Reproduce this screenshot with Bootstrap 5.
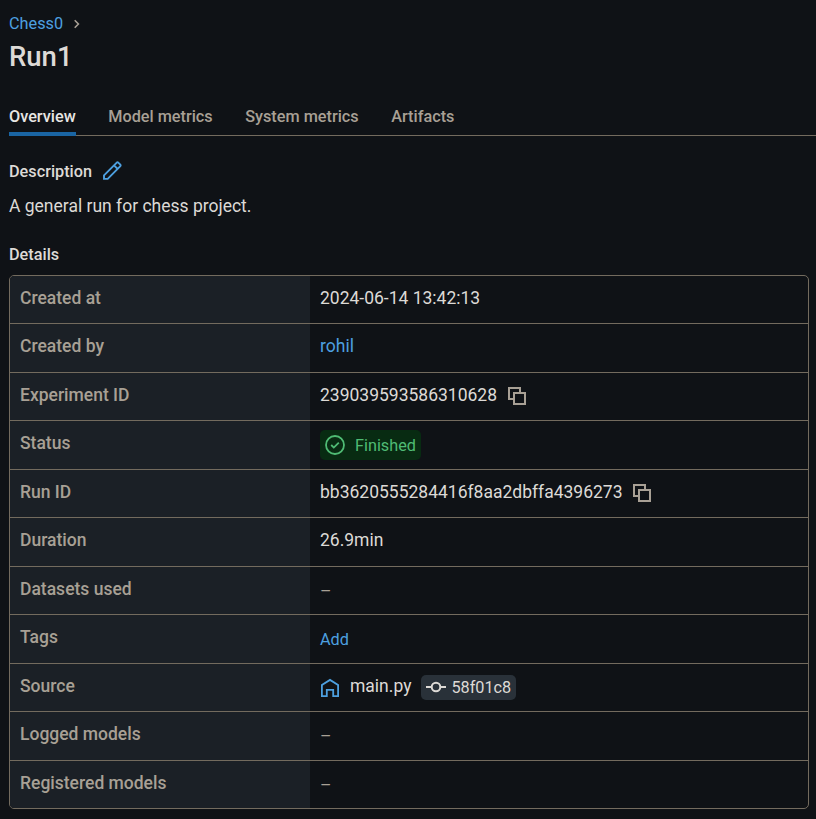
<!DOCTYPE html>
<html lang="en" data-bs-theme="dark">
<head>
<meta charset="utf-8">
<meta name="viewport" content="width=device-width, initial-scale=1">
<title>Run1</title>
<link href="https://cdn.jsdelivr.net/npm/bootstrap@5.3.0/dist/css/bootstrap.min.css" rel="stylesheet">
<style>
body{background:#0f1216;color:#dddad6;font-family:Roboto,"Liberation Sans",sans-serif;font-size:17.5px;line-height:25px;overflow:hidden}
a{color:#4da0e0;text-decoration:none}
svg{display:block;flex:none;fill:none;stroke:currentColor}
.page{padding:11px 0 0 9px}
.crumb{font-size:16.25px}
.crumb svg,.muted{color:#a8a095}
.chev{margin-left:11px}
.run-title{font-size:27.5px;line-height:40px;font-weight:500;margin:1px 0 27px;color:#dddad6}
.run-tabs{gap:32.5px;border-bottom:1px solid #736b5e;font-size:16.25px;font-weight:500;line-height:25px}
.run-tabs a{color:#a8a095;padding:0 0 3px;border-bottom:4px solid transparent;margin-bottom:-1px}
.run-tabs .active{color:#e8e6e3;border-color:#1a65a3}
.heading{font-size:16.25px;font-weight:500;line-height:25px;margin:0;color:#dddad6}
.desc-head{margin-top:23px}
.edit{margin:-3px 0 0 11px}
.desc-text{margin:10px 0 23px}
.details{width:800px;border:1px solid #736b5e;border-radius:5px;overflow:hidden;margin:7.5px 0 0}
.entry{height:48.5px;border-bottom:1px solid #736b5e}
.entry:last-child{border-bottom:0;height:47.5px}
.entry dt{width:300px;background:#1b2026;color:#a8a095;font-weight:500;padding:10px 10px 0}
.entry dd{margin:0;padding:10px 10px 0}
.entry .dash{padding-top:12px}
.entry .tag{padding-top:12px}
.small-text{font-size:16.25px}
.copy{margin:4px 0 0 10.5px}
.home{margin:4px 10px 0 0}
.finished{background:#082b12;color:#4fbb74;border-radius:5px;height:30px;padding:0 5px;gap:10px;margin-top:-1px}
.commit{background:#293139;border-radius:5px;height:25px;padding:0 5px;gap:5px;margin:1px 0 0 10px}
</style>
</head>
<body>
<svg class="d-none"><defs>
<symbol id="copy" viewBox="0 0 18 18"><path d="M6 12H1V1h11v5M6 6h11v11H6z"/></symbol>
</defs></svg>
<main class="page">
<nav class="crumb d-flex align-items-center"><a href="#">Chess0</a><svg class="chev" width="6" height="10" viewBox="0 0 6 10" stroke-width="1.6"><path d="M.7 1.3 4.4 5 .7 8.7"/></svg></nav>
<h1 class="run-title">Run1</h1>
<nav class="run-tabs d-flex"><a class="active" href="#">Overview</a><a href="#">Model metrics</a><a href="#">System metrics</a><a href="#">Artifacts</a></nav>
<section>
<div class="desc-head d-flex align-items-center"><h2 class="heading">Description</h2><a href="#" class="edit" aria-label="Edit"><svg width="19" height="19" viewBox="0 0 19 19" stroke-width="1.9"><path d="M1 14.3 13.5 1.8q1-1 2 0l1.6 1.6q1 1 0 2L4.7 17.9H1zM11 4.3l3.7 3.7"/></svg></a></div>
<p class="desc-text">A general run for chess project.</p>
<h2 class="heading">Details</h2>
<dl class="details">
<div class="entry d-flex"><dt>Created at</dt><dd>2024-06-14 13:42:13</dd></div>
<div class="entry d-flex"><dt>Created by</dt><dd><a href="#">rohil</a></dd></div>
<div class="entry d-flex"><dt>Experiment ID</dt><dd class="d-flex">239039593586310628<svg class="muted copy" width="18" height="18" stroke-width="2"><use href="#copy"/></svg></dd></div>
<div class="entry d-flex"><dt>Status</dt><dd><span class="finished small-text d-flex align-items-center"><svg width="20" height="20" viewBox="0 0 20 20" stroke-width="1.8"><circle cx="10" cy="10" r="9"/><path d="m6.2 10 2.6 2.6 5-5"/></svg>Finished</span></dd></div>
<div class="entry d-flex"><dt>Run ID</dt><dd class="d-flex">bb3620555284416f8aa2dbffa4396273<svg class="muted copy" width="18" height="18" stroke-width="2"><use href="#copy"/></svg></dd></div>
<div class="entry d-flex"><dt>Duration</dt><dd>26.9min</dd></div>
<div class="entry d-flex"><dt>Datasets used</dt><dd class="muted dash">–</dd></div>
<div class="entry d-flex"><dt>Tags</dt><dd class="tag"><a class="small-text" href="#">Add</a></dd></div>
<div class="entry d-flex"><dt>Source</dt><dd class="d-flex"><a href="#" class="home" aria-label="Project"><svg width="20" height="20" viewBox="0 0 20 20" stroke-width="1.8"><path d="M1.9 18.1V7L10 1.9 18.1 7v11.1h-4.9v-6.2H6.8v6.2z"/></svg></a>main.py<span class="commit small-text d-flex align-items-center"><svg width="20" height="12" viewBox="0 0 20 12" stroke-width="2"><circle cx="10" cy="6" r="4.3"/><path d="M0 6h5.5M14.5 6H20"/></svg>58f01c8</span></dd></div>
<div class="entry d-flex"><dt>Logged models</dt><dd class="muted dash">–</dd></div>
<div class="entry d-flex"><dt>Registered models</dt><dd class="muted dash">–</dd></div>
</dl>
</section>
</main>
<script src="https://cdn.jsdelivr.net/npm/bootstrap@5.3.0/dist/js/bootstrap.bundle.min.js"></script>
</body>
</html>
